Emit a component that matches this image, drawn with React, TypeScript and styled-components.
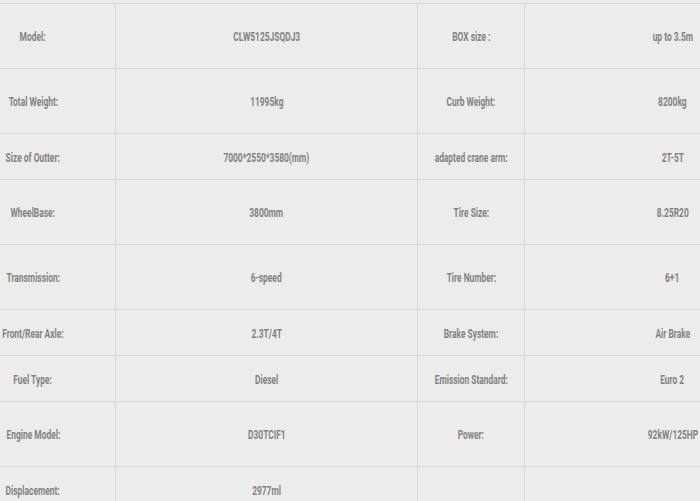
import React from "react";
import styled, { createGlobalStyle } from "styled-components";

const GlobalStyle = createGlobalStyle`
  html, body {
    margin: 0;
    padding: 0;
    background: #ececec;
    overflow: hidden;
  }
`;

const Page = styled.div`
  width: 700px;
  height: 501px;
  overflow: hidden;
  padding-top: 3px;
  box-sizing: border-box;
`;

// the spec table is wider than the window, shifted so col 1 is half out
const SpecTable = styled.table`
  border-collapse: collapse;
  table-layout: fixed;
  width: 866px;
  margin-left: -50px;
  background: #ececec;

  td:nth-child(1) { width: 164px; }
  td:nth-child(2) { width: 301px; }
  td:nth-child(3) { width: 106px; }
  td:nth-child(4) { width: 295px; }
`;

const Row = styled.tr<{ $tall?: boolean }>`
  height: ${(p) => (p.$tall ? "65px" : "46px")};
`;

const Cell = styled.td`
  border: 1px solid #d6d6d6;
  text-align: center;
  vertical-align: middle;
  padding: 0;
  white-space: nowrap;
  overflow: visible;
`;

// condensed look of the original web font
const Text = styled.span`
  display: inline-block;
  font-family: Roboto, "DejaVu Sans", sans-serif;
  font-size: 12px;
  font-weight: 700;
  color: #828282;
  transform: scaleX(0.7);
  transform-origin: center;
  margin: -1px -40px 0;
`;

interface Spec {
  label: string;
  value: string;
  label2: string;
  value2: string;
  tall?: boolean;
}

const specs: Spec[] = [
  { label: "Model:", value: "CLW5125JSQDJ3", label2: "BOX size :", value2: "up to 3.5m", tall: true },
  { label: "Total Weight:", value: "11995kg", label2: "Curb Weight:", value2: "8200kg", tall: true },
  { label: "Size of Outter:", value: "7000*2550*3580(mm)", label2: "adapted crane arm:", value2: "2T-5T" },
  { label: "WheelBase:", value: "3800mm", label2: "Tire Size:", value2: "8.25R20", tall: true },
  { label: "Transmission:", value: "6-speed", label2: "Tire Number:", value2: "6+1", tall: true },
  { label: "Front/Rear Axle:", value: "2.3T/4T", label2: "Brake System:", value2: "Air Brake" },
  { label: "Fuel Type:", value: "Diesel", label2: "Emission Standard:", value2: "Euro 2" },
  { label: "Engine Model:", value: "D30TCIF1", label2: "Power:", value2: "92kW/125HP", tall: true },
  { label: "Displacement:", value: "2977ml", label2: "", value2: "" },
];

export default function App() {
  return (
    <Page>
      <GlobalStyle />
      <SpecTable>
        <tbody>
          {specs.map((s) => (
            <Row key={s.label} $tall={s.tall}>
              <Cell><Text>{s.label}</Text></Cell>
              <Cell><Text>{s.value}</Text></Cell>
              <Cell>{s.label2 && <Text>{s.label2}</Text>}</Cell>
              <Cell>{s.value2 && <Text>{s.value2}</Text>}</Cell>
            </Row>
          ))}
        </tbody>
      </SpecTable>
    </Page>
  );
}
